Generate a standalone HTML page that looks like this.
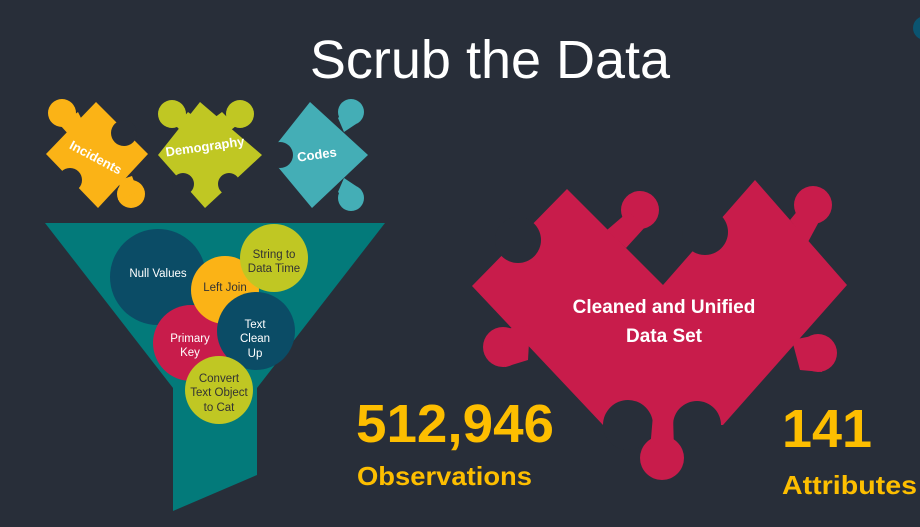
<!DOCTYPE html>
<html><head><style>
body{margin:0;width:920px;height:527px;background:#282e39;overflow:hidden;font-family:"Liberation Sans",sans-serif}
svg{position:absolute;left:0;top:0}
</style></head><body>
<svg width="920" height="527" viewBox="0 0 920 527">
<text x="490" y="78" fill="#fff" font-size="54" text-anchor="middle">Scrub the Data</text>
<circle cx="925" cy="28" r="12" fill="#0b5470"/>
<!-- Incidents -->
<g fill="#fbb316">
<polygon points="96,102 148,154 98,208 46,154"/>
<circle cx="62" cy="113" r="14"/><polygon points="60,125 78,112 86,128 70,136"/>
<circle cx="131" cy="194" r="14"/><polygon points="120,180 132,176 138,192 118,200"/>
</g>
<circle cx="124" cy="133" r="13" fill="#282e39"/>
<circle cx="70" cy="180" r="12" fill="#282e39"/>
<!-- Demography -->
<g fill="#c0c723">
<polygon points="200,102 262,155 205,208 158,155"/>
<circle cx="172" cy="114" r="14"/><polygon points="176,126 188,112 196,118 184,134"/>
<circle cx="240" cy="114" r="14"/><polygon points="236,126 222,112 214,118 226,134"/>
</g>
<circle cx="183" cy="184" r="11" fill="#282e39"/>
<circle cx="229" cy="184" r="11" fill="#282e39"/>
<!-- Codes -->
<g fill="#44aeb6">
<polygon points="310,102 368,155 312,208 268,155"/>
<circle cx="351" cy="112" r="13"/><polygon points="338,118 346,110 356,124 344,132"/>
<circle cx="351" cy="198" r="13"/><polygon points="338,192 346,200 356,186 344,178"/>
</g>
<circle cx="280" cy="155" r="13" fill="#282e39"/>
<g fill="#fff" font-weight="bold" font-size="13" text-anchor="middle">
<text x="96" y="162" transform="rotate(28 96 157)">Incidents</text>
<text x="205" y="151" transform="rotate(-8 205 147)">Demography</text>
<text x="317" y="159" transform="rotate(-8 317 155)">Codes</text>
</g>
<!-- funnel -->
<polygon points="45,223 385,223 257,388 257,475 173,511 173,388" fill="#037a7a"/>
<circle cx="158" cy="277" r="48" fill="#0b4c66"/>
<circle cx="191" cy="343" r="38" fill="#c81c4b"/>
<circle cx="225" cy="290" r="34" fill="#fbb316"/>
<circle cx="274" cy="258" r="34" fill="#c0c723"/>
<circle cx="256" cy="331" r="39" fill="#0b4c66"/>
<circle cx="219" cy="390" r="34" fill="#c0c723"/>
<g font-size="11.5" text-anchor="middle">
<text x="158" y="277" fill="#fff">Null Values</text>
<text x="225" y="291" fill="#333">Left Join</text>
<text x="274" y="258" fill="#333">String to</text><text x="274" y="272" fill="#333">Data Time</text>
<text x="190" y="342" fill="#fff">Primary</text><text x="190" y="356" fill="#fff">Key</text>
<text x="255" y="328" fill="#fff">Text</text><text x="255" y="342" fill="#fff">Clean</text><text x="255" y="357" fill="#fff">Up</text>
<text x="219" y="382" fill="#333">Convert</text><text x="219" y="396" fill="#333">Text Object</text><text x="219" y="411" fill="#333">to Cat</text>
</g>
<!-- big red puzzle -->
<polygon fill="#c81c4b" points="567,189 663,285 755,180 847,285 723,425 603,425 472,286"/>
<g fill="#282e39">
<circle cx="518" cy="240" r="23"/>
<circle cx="705" cy="232" r="23"/>
<circle cx="628" cy="425" r="25"/>
<circle cx="697" cy="425" r="24"/>
</g>
<g fill="#c81c4b">
<circle cx="640" cy="210" r="19"/><polygon points="607,230 628,212 646,226 626,248"/>
<circle cx="813" cy="205" r="19"/><polygon points="790,220 808,198 822,216 808,242"/>
<circle cx="503" cy="347" r="20"/><polygon points="500,330 530,325 528,360 505,367"/>
<circle cx="818" cy="353" r="19"/><polygon points="792,340 812,336 822,372 800,370"/>
<circle cx="662" cy="458" r="22"/><polygon points="653,415 673,415 674,450 650,450"/>
</g>
<g fill="#fff" font-weight="bold" font-size="19" text-anchor="middle">
<text x="664" y="313">Cleaned and Unified</text>
<text x="664" y="342">Data Set</text>
</g>
<g fill="#fdbe00" font-weight="bold">
<text x="356" y="442" font-size="54" textLength="198" lengthAdjust="spacingAndGlyphs">512,946</text>
<text x="357" y="485" font-size="26" textLength="175" lengthAdjust="spacingAndGlyphs">Observations</text>
<text x="782" y="447" font-size="54" textLength="90" lengthAdjust="spacingAndGlyphs">141</text>
<text x="782" y="494" font-size="26" textLength="135" lengthAdjust="spacingAndGlyphs">Attributes</text>
</g>
</svg>
</body></html>
